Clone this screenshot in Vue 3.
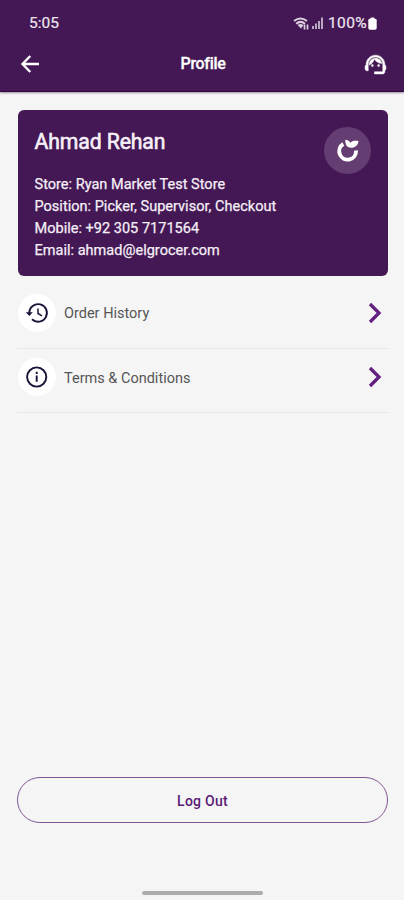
<script setup>
const details = [
  { label: 'Store', value: 'Ryan Market Test Store' },
  { label: 'Position', value: 'Picker, Supervisor, Checkout' },
  { label: 'Mobile', value: '+92 305 7171564' },
  { label: 'Email', value: 'ahmad@elgrocer.com' },
]
const links = [
  { id: 'history', label: 'Order History' },
  { id: 'terms', label: 'Terms & Conditions' },
]
</script>

<template>
  <div class="screen">
    <header class="header">
      <div class="status">
        <span class="time">5:05</span>
        <div class="indicators">
          <svg class="wifi" width="18" height="13" viewBox="0 0 18 13" fill="none" stroke="#dccfe0" stroke-width="2">
            <path d="M1 4Q7.500-1 14 4M3.200 6.700Q7.500 3 12 6.700" />
            <path d="M4.500 8q3-1.800 6 0L8 11.500z" fill="#dccfe0" stroke="none" />
            <path d="M11.500 7.500v5M14.500 7.500v5" stroke-width="1.700" />
          </svg>
          <svg class="signal" width="12" height="12" viewBox="0 0 12 12" fill="#b9a6c0">
            <rect x="0" y="9" width="2" height="3" /><rect x="3" y="6.500" width="2" height="5.500" />
            <rect x="6" y="4" width="2" height="8" /><rect x="9" y="0.500" width="2" height="11.500" />
          </svg>
          <span class="percent">100%</span>
          <svg class="battery" width="9" height="13" viewBox="0 0 9 13" fill="#fff">
            <rect x="2.500" y="0.500" width="4" height="3" rx="0.800" /><rect x="0.300" y="1.700" width="8.400" height="11" rx="1.600" />
          </svg>
        </div>
      </div>
      <nav class="bar">
        <button class="icon-button" aria-label="Back">
          <svg width="20" height="20" viewBox="0 0 20 20" fill="none" stroke="#fff" stroke-width="2.400">
            <path d="M19 10H3M10.300 2L2.500 10l7.800 8" />
          </svg>
        </button>
        <h1>Profile</h1>
        <button class="icon-button" aria-label="Support">
          <svg width="25" height="25" viewBox="0 0 24 24" fill="#fff" stroke="#fff" stroke-width="0.500">
            <path d="M21 12.220C21 6.730 16.740 3 12 3c-4.690 0-9 3.650-9 9.280-.6.340-1 .980-1 1.720v2c0 1.100.9 2 2 2h1v-6.100c0-3.870 3.130-7 7-7s7 3.130 7 7V19h-8v2h8c1.100 0 2-.9 2-2v-1.220c.590-.310 1-.920 1-1.640v-2.300c0-.7-.410-1.310-1-1.620z" />
            <circle cx="9" cy="13" r="1" /><circle cx="15" cy="13" r="1" />
            <path d="M18 11.030C17.520 8.180 15.040 6 12.050 6c-3.030 0-6.290 2.510-6.030 6.450 2.470-1.010 4.330-3.210 4.860-5.890 1.310 2.630 4 4.440 7.120 4.470z" />
          </svg>
        </button>
      </nav>
    </header>

    <main class="content">
      <section class="card">
        <div>
          <h2>Ahmad Rehan</h2>
          <p v-for="d in details" :key="d.label">{{ d.label }}: {{ d.value }}</p>
        </div>
        <div class="brand">
          <svg width="24" height="24" viewBox="0 0 24 24">
            <path d="M7.300 5A8.400 8.400 0 1 0 20 11.500" fill="none" stroke="#fff" stroke-width="3.900" />
            <path d="M9.300 0.700c2.600.1 4.200 1.300 4.900 3.100 1.600-2 4.500-2.400 8.300-1.900-.6 4.500-3.500 6.800-7.300 6.800-4 0-6.100-3-5.900-8z" fill="#fff" />
          </svg>
        </div>
      </section>

      <a v-for="l in links" :key="l.id" class="row">
        <span class="bubble">
          <svg v-if="l.id === 'history'" width="24" height="24" viewBox="0 0 24 24" fill="none" stroke="#1d1238" stroke-width="1.900">
            <path d="M4.300 12A8.800 8.800 0 1 1 7 18.300" />
            <path d="M0.800 11.200h7L4.300 15z" fill="#1d1238" stroke="none" />
            <path d="M13 7.500v5l4 2.400" stroke-width="1.500" />
          </svg>
          <svg v-else width="24" height="24" viewBox="0 0 24 24" fill="none" stroke="#1d1238" stroke-width="1.900">
            <circle cx="11.700" cy="12" r="9.600" /><path d="M11.700 10.500v6.300M11.700 6.800v2.100" />
          </svg>
        </span>
        <span class="label">{{ l.label }}</span>
        <svg class="chevron" width="14" height="22" viewBox="0 0 14 22" fill="none" stroke="#622080" stroke-width="3.300">
          <path d="M2 2l9 9-9 9" />
        </svg>
      </a>

      <button class="logout">Log Out</button>
    </main>
    <div class="home"></div>
  </div>
</template>

<style>
body { background: #f5f5f5; }
</style>

<style scoped>
.screen {
  box-sizing: border-box;
  display: flex;
  flex-direction: column;
  width: 404px;
  height: 900px;
  background: #f5f5f5;
  font-family: Roboto, sans-serif;
}
.header {
  box-sizing: border-box;
  height: 92px;
  background: #441854;
  border-bottom: 1px solid #34083f;
  box-shadow: 0 1px 2px #9b8da2;
  color: #fff;
}
.status {
  display: flex;
  justify-content: space-between;
  align-items: center;
  height: 28px;
  padding: 9px 27px 0 29px;
  color: #eee7f0;
}
.time { font-size: 15.5px; -webkit-text-stroke: 0.2px; }
.indicators { display: flex; align-items: center; }
.signal { margin-left: 1px; }
.percent { margin-left: 4px; font-size: 15.5px; letter-spacing: 0.4px; -webkit-text-stroke: 0.2px; }
.battery { margin-left: 1px; }
.bar {
  display: flex;
  justify-content: space-between;
  align-items: center;
  height: 54px;
  padding: 0 16px 0 20px;
}
.icon-button {
  display: flex;
  justify-content: center;
  width: 25px;
  padding: 0;
  border: 0;
  background: none;
}
.icon-button:first-child { width: 20px; }
h1 { margin: 0 0 0 3px; font-size: 16px; line-height: 20px; font-weight: 500; letter-spacing: -0.3px; -webkit-text-stroke: 0.3px; }
.content { display: flex; flex: 1; flex-direction: column; padding: 18px 16px 0 17px; }
.card {
  box-sizing: border-box;
  display: flex;
  justify-content: space-between;
  height: 166px;
  margin-left: 1px;
  padding: 17px 17px 0 16.500px;
  border-radius: 6px;
  background: #441854;
  color: #f5eff7;
}
h2 { margin: 0 0 18px; font-size: 21.2px; line-height: 29px; font-weight: 400; letter-spacing: -0.1px; -webkit-text-stroke: 0.6px; }
p { margin: 0; font-size: 14.5px; line-height: 22px; letter-spacing: 0.02px; -webkit-text-stroke: 0.25px; }
.brand {
  display: flex;
  align-items: center;
  justify-content: center;
  width: 47px;
  height: 47px;
  border-radius: 50%;
  background: #643d72;
}
.row {
  box-sizing: border-box;
  display: flex;
  align-items: center;
  height: 64px;
  padding: 0 6px 7px 0;
  border-bottom: 1px solid #e8e8e8;
}
.card + .row { height: 73px; padding: 1px 6px 0 0; }
.bubble {
  display: flex;
  align-items: center;
  justify-content: center;
  width: 38px;
  height: 38px;
  margin-left: 1px;
  border-radius: 50%;
  background: #fff;
}
.label { flex: 1; margin-left: 8px; padding-top: 2px; font-size: 14.5px; color: #555; }
.logout {
  box-sizing: border-box;
  height: 46px;
  margin-top: auto;
  margin-bottom: 68px;
  padding: 2px 0 0;
  border: 1px solid #805596;
  border-radius: 23px;
  background: transparent;
  color: #5a1b76;
  font: 500 14px Roboto, sans-serif;
  letter-spacing: 0.25px;
}
.home { width: 121px; height: 4px; margin: 0 auto 5px; border-radius: 2px; background: #acacac; }
</style>
